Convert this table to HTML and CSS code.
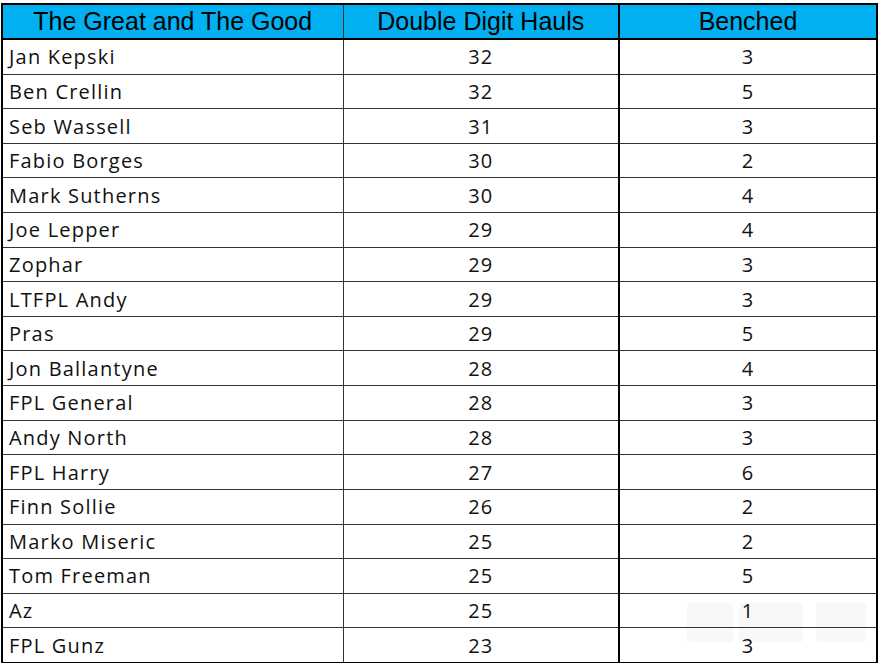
FILE: index.html
```html
<!DOCTYPE html>
<html>
<head>
<meta charset="utf-8">
<link rel="stylesheet" href="styles.css">
</head>
<body>
<table class="sheet">
  <colgroup>
    <col class="c-name">
    <col class="c-hauls">
    <col class="c-bench">
  </colgroup>
  <thead>
    <tr>
      <th class="h-name">The Great and The Good</th>
      <th class="h-hauls">Double Digit Hauls</th>
      <th>Benched</th>
    </tr>
  </thead>
  <tbody>
    <tr><td class="name">Jan Kepski</td><td class="hauls">32</td><td>3</td></tr>
    <tr><td class="name">Ben Crellin</td><td class="hauls">32</td><td>5</td></tr>
    <tr><td class="name">Seb Wassell</td><td class="hauls">31</td><td>3</td></tr>
    <tr><td class="name">Fabio Borges</td><td class="hauls">30</td><td>2</td></tr>
    <tr><td class="name">Mark Sutherns</td><td class="hauls">30</td><td>4</td></tr>
    <tr><td class="name">Joe Lepper</td><td class="hauls">29</td><td>4</td></tr>
    <tr><td class="name">Zophar</td><td class="hauls">29</td><td>3</td></tr>
    <tr><td class="name">LTFPL Andy</td><td class="hauls">29</td><td>3</td></tr>
    <tr><td class="name">Pras</td><td class="hauls">29</td><td>5</td></tr>
    <tr><td class="name">Jon Ballantyne</td><td class="hauls">28</td><td>4</td></tr>
    <tr><td class="name">FPL General</td><td class="hauls">28</td><td>3</td></tr>
    <tr><td class="name">Andy North</td><td class="hauls">28</td><td>3</td></tr>
    <tr><td class="name">FPL Harry</td><td class="hauls">27</td><td>6</td></tr>
    <tr><td class="name">Finn Sollie</td><td class="hauls">26</td><td>2</td></tr>
    <tr><td class="name">Marko Miseric</td><td class="hauls">25</td><td>2</td></tr>
    <tr><td class="name">Tom Freeman</td><td class="hauls">25</td><td>5</td></tr>
    <tr><td class="name">Az</td><td class="hauls">25</td><td>1</td></tr>
    <tr><td class="name">FPL Gunz</td><td class="hauls">23</td><td>3</td></tr>
  </tbody>
</table>
<div class="ghost">
  <span class="g1"></span><span class="g2"></span><span class="g3"></span>
</div>
</body>
</html>
```
FILE: styles.css
```css
html {
  margin: 0;
  padding: 0;
  background: #ffffff;
}
body {
  margin: 0;
  padding: 3px 0 0 1px;
  position: relative;
  overflow: hidden;
  height: 663px;
  box-sizing: border-box;
}
.sheet {
  border-collapse: collapse;
  table-layout: fixed;
  width: 877px;
  border: 2px solid #000;
}
.c-name { width: 341px; }
.c-hauls { width: 276px; }
.sheet th {
  background: #00b0f0;
  color: #000;
  font-family: "Liberation Sans", Arial, sans-serif;
  font-weight: normal;
  font-size: 25px;
  height: 33px;
  padding: 0;
  text-align: center;
  border-bottom: 2px solid #000;
  line-height: 33px;
}
.sheet th.h-name { border-right: 1px solid #333; }
.sheet th.h-hauls { border-right: 2px solid #000; }
.sheet td {
  font-family: "Open Sans", "Noto Sans", sans-serif;
  font-size: 20px;
  color: #111;
  height: 33.62px;
  padding: 0;
  text-align: center;
  border-bottom: 1px solid #333;
  line-height: 33px;
  letter-spacing: 1px;
}
.sheet td.name {
  text-align: left;
  padding-left: 6px;
  border-right: 1px solid #333;
  letter-spacing: 1.2px;
}
.sheet td.hauls { border-right: 2px solid #000; }
.ghost {
  position: absolute;
  z-index: -1;
  left: 687px;
  top: 603px;
  display: flex;
  gap: 6px;
  pointer-events: none;
}
.ghost span {
  display: block;
  height: 39px;
  background: #f8f8f8;
  border-radius: 3px;
}
.ghost .g1 { width: 46px; }
.ghost .g2 { width: 64px; margin-right: 7px; }
.ghost .g3 { width: 50px; }
```
